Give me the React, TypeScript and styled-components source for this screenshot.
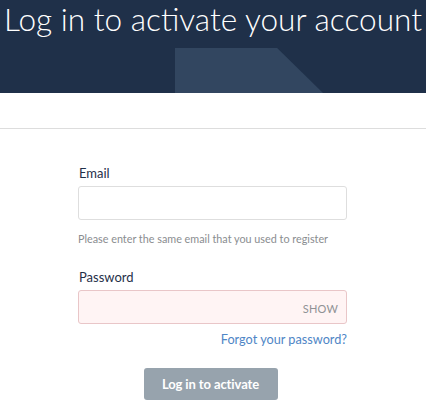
import React from "react";
import styled, { createGlobalStyle } from "styled-components";

const Global = createGlobalStyle`
  html, body { margin: 0; padding: 0; background: #fff; }
  body { font-family: Lato, "Open Sans", sans-serif; }
  * { box-sizing: border-box; }
`;

const Page = styled.div`
  width: 426px;
  height: 405px;
  overflow: hidden;
  display: flex;
  flex-direction: column;
`;

const Hero = styled.header`
  position: relative;
  height: 93px;
  background: #1f3049;
  overflow: hidden;
  display: flex;
  justify-content: center;
`;

const HeroShape = styled.div`
  position: absolute;
  left: 175px;
  top: 48px;
  width: 148px;
  height: 45px;
  background: #324660;
  clip-path: polygon(0 0, 69% 0, 100% 100%, 0 100%);
`;

const Title = styled.h1`
  position: relative;
  margin: 0;
  padding-top: 1px;
  font-family: Lato, sans-serif;
  font-weight: 300;
  font-size: 31.6px;
  line-height: 36px;
  color: #ffffff;
  white-space: nowrap;
`;

const Divider = styled.hr`
  margin: 35px 0 0;
  border: none;
  border-top: 1px solid #dddddd;
`;

const Form = styled.form`
  width: 269px;
  margin: 36px 0 0 78px;
  display: flex;
  flex-direction: column;
`;

const Label = styled.label<{ $top?: number }>`
  font-size: 13px;
  line-height: 16px;
  color: #1f3049;
  margin: ${(p) => p.$top ?? 0}px 0 0 1px;
`;

const Field = styled.div<{ $error?: boolean }>`
  margin-top: 5px;
  height: 34px;
  border: 1px solid ${(p) => (p.$error ? "#e9c6c8" : "#dedede")};
  background: ${(p) => (p.$error ? "#fff4f4" : "#ffffff")};
  border-radius: 3px;
  display: flex;
  align-items: center;
  justify-content: flex-end;
  padding: 0 8px;
`;

const Show = styled.span`
  font-size: 11px;
  color: #8f9295;
  letter-spacing: 0.2px;
  margin-top: 3px;
`;

const Help = styled.div`
  margin-top: 12px;
  font-size: 10.8px;
  line-height: 14px;
  color: #8a8d90;
`;

const Forgot = styled.a`
  align-self: flex-end;
  margin-top: 7px;
  font-size: 12.7px;
  line-height: 16px;
  color: #4f86c6;
  text-decoration: none;
`;

const Button = styled.button`
  align-self: center;
  margin: 21px 0 0 -4px;
  width: 134px;
  height: 32px;
  border: none;
  border-radius: 3px;
  background: #97a3ad;
  color: #ffffff;
  font-family: Lato, sans-serif;
  font-weight: 700;
  font-size: 13px;
  letter-spacing: -0.1px;
`;

export default function App() {
  return (
    <Page>
      <Global />
      <Hero>
        <HeroShape />
        <Title>Log in to activate your account</Title>
      </Hero>
      <Divider />
      <Form>
        <Label>Email</Label>
        <Field />
        <Help>Please enter the same email that you used to register</Help>
        <Label $top={23}>Password</Label>
        <Field $error>
          <Show>SHOW</Show>
        </Field>
        <Forgot href="#">Forgot your password?</Forgot>
        <Button type="button">Log in to activate</Button>
      </Form>
    </Page>
  );
}
